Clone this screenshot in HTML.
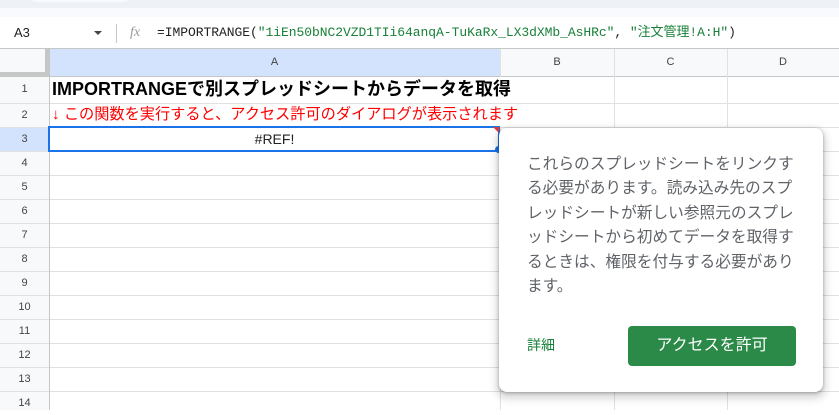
<!DOCTYPE html>
<html><head><meta charset="utf-8"><style>
body{margin:0;width:839px;height:410px;overflow:hidden;background:#fff;font-family:"Liberation Sans","Noto Sans CJK JP",sans-serif;position:relative}
.a{position:absolute}
.hl{position:absolute;left:0;width:839px;height:1px;background:#e1e1e1}
.vl{position:absolute;top:49px;width:1px;height:361px;background:#e1e1e1}
.rn{position:absolute;left:0;width:49px;text-align:center;font-size:11px;color:#444}
.ch{position:absolute;top:49px;height:27px;line-height:27px;text-align:center;font-size:11px;color:#444}
</style></head><body>
<div class="a" style="left:0;top:0;width:839px;height:17px;background:#f8fafd"></div>
<div class="a" style="left:0;top:0;width:839px;height:8px;background:#eef1f6"></div>
<div class="a" style="left:30px;top:-10px;width:100px;height:12px;background:#f8fafd;border-radius:6px"></div>
<div class="a" style="left:14px;top:17px;height:32px;line-height:32px;font-size:13px;color:#222">A3</div>
<div class="a" style="left:94px;top:31px;width:0;height:0;border-left:4px solid transparent;border-right:4px solid transparent;border-top:4px solid #444"></div>
<div class="a" style="left:116px;top:24px;width:1px;height:19px;background:#c7c7c7"></div>
<div class="a" style="left:130px;top:17px;height:32px;line-height:32px;font-size:14px;font-style:italic;color:#999;font-family:'Liberation Serif',serif">fx</div>
<div class="a" style="left:157px;top:17px;height:32px;line-height:32px;font-size:13px;font-family:'Liberation Mono','Noto Sans CJK JP',monospace;color:#222;white-space:nowrap;letter-spacing:-0.05px">=IMPORTRANGE(<span style="color:#188038">"1iEn50bNC2VZD1TIi64anqA-TuKaRx_LX3dXMb_AsHRc"</span>, <span style="color:#188038">"注文管理!A:H"</span>)</div>
<div class="a" style="left:0;top:49px;width:839px;height:27px;background:#f8f9fa"></div>
<div class="a" style="left:49px;top:49px;width:451px;height:27px;background:#d3e3fd"></div>
<div class="a" style="left:0;top:49px;width:49px;height:361px;background:#f8f9fa"></div>
<div class="a" style="left:0;top:127px;width:49px;height:24px;background:#d3e3fd"></div>
<div class="a" style="left:0;top:49px;width:45px;height:23px;background:#f8f9fa;border-right:4px solid #c4c7c5;border-bottom:4px solid #c4c7c5"></div>
<div class="hl" style="top:48px;background:#c4c7c5"></div>
<div class="hl" style="top:76px;background:#c4c7c5"></div>
<div class="hl" style="top:103px"></div><div class="hl" style="top:127px"></div><div class="hl" style="top:151px"></div>
<div class="hl" style="top:175px"></div><div class="hl" style="top:199px"></div><div class="hl" style="top:223px"></div>
<div class="hl" style="top:247px"></div><div class="hl" style="top:271px"></div><div class="hl" style="top:295px"></div>
<div class="hl" style="top:319px"></div><div class="hl" style="top:343px"></div><div class="hl" style="top:367px"></div><div class="hl" style="top:391px"></div>
<div class="vl" style="left:49px;background:#c4c7c5"></div><div class="vl" style="left:500px"></div><div class="vl" style="left:614px"></div><div class="vl" style="left:727px"></div>
<div class="a" style="left:50px;top:104px;width:465px;height:23px;background:#fff"></div>
<div class="a" style="left:50px;top:77px;width:465px;height:26px;background:#fff"></div>
<div class="ch" style="left:49px;width:451px">A</div><div class="ch" style="left:500px;width:114px">B</div><div class="ch" style="left:614px;width:113px">C</div><div class="ch" style="left:727px;width:112px">D</div>
<div class="rn" style="top:76px;line-height:27px">1</div><div class="rn" style="top:103px;line-height:24px">2</div><div class="rn" style="top:127px;line-height:24px">3</div>
<div class="rn" style="top:151px;line-height:24px">4</div><div class="rn" style="top:175px;line-height:24px">5</div><div class="rn" style="top:199px;line-height:24px">6</div><div class="rn" style="top:223px;line-height:24px">7</div><div class="rn" style="top:247px;line-height:24px">8</div><div class="rn" style="top:271px;line-height:24px">9</div><div class="rn" style="top:295px;line-height:24px">10</div><div class="rn" style="top:319px;line-height:24px">11</div><div class="rn" style="top:343px;line-height:24px">12</div><div class="rn" style="top:367px;line-height:24px">13</div><div class="rn" style="top:391px;line-height:24px">14</div>
<div class="a" style="left:52px;top:76px;line-height:27px;font-size:18px;font-weight:bold;color:#000;white-space:nowrap">IMPORTRANGEで別スプレッドシートからデータを取得</div>
<div class="a" style="left:52px;top:103px;line-height:24px;font-size:15.2px;color:#ff0000;white-space:nowrap">↓ この関数を実行すると、アクセス許可のダイアログが表示されます</div>
<div class="a" style="left:48px;top:126px;width:448px;height:22px;border:2px solid #1a73e8;background:#fff"></div>
<div class="a" style="left:49px;top:127px;width:451px;line-height:24px;text-align:center;font-size:14px;color:#222">#REF!</div>
<div class="a" style="left:493px;top:127px;width:0;height:0;border-left:6px solid transparent;border-top:6px solid #e53935"></div>
<div class="a" style="left:495px;top:146px;width:7px;height:7px;border-radius:50%;background:#1a73e8"></div>
<div class="a" style="left:499px;top:128px;width:324px;height:264px;background:#fff;border-radius:8px;box-shadow:0 1px 3px rgba(0,0,0,.3),0 4px 8px 3px rgba(0,0,0,.15)"></div>
<div class="a" style="left:527px;top:153px;width:272px;font-size:15.7px;line-height:24.4px;color:#5f6368">これらのスプレッドシートをリンクする必要があります。読み込み先のスプレッドシートが新しい参照元のスプレッドシートから初めてデータを取得するときは、権限を付与する必要があります。</div>
<div class="a" style="left:527px;top:334px;font-size:14px;color:#188038;line-height:22px">詳細</div>
<div class="a" style="left:628px;top:326px;width:168px;height:40px;background:#2b8a47;border-radius:4px;color:#fff;font-size:16px;line-height:40px;text-align:center">アクセスを許可</div>
</body></html>
